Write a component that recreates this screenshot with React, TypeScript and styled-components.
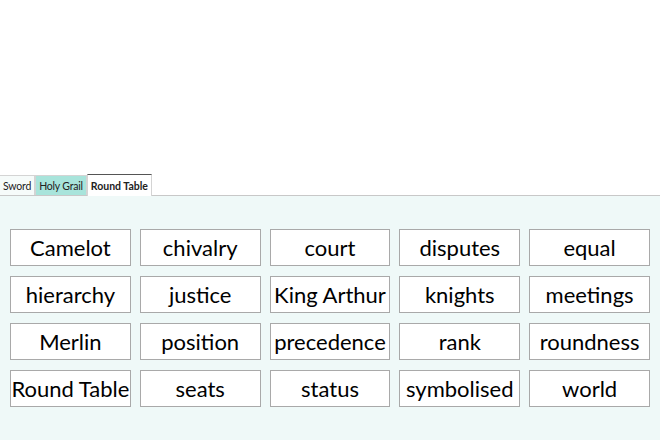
import React from "react";
import styled, { createGlobalStyle } from "styled-components";

const Global = createGlobalStyle`
  html, body { margin: 0; padding: 0; background: #ffffff; }
  body { font-family: "Lato", "Open Sans", sans-serif; }
  #root { width: 660px; height: 440px; }
`;

const Page = styled.div`
  width: 660px;
  height: 440px;
  display: flex;
  flex-direction: column;
  justify-content: flex-end;
  overflow: hidden;
`;

const TabBar = styled.div`
  display: flex;
  align-items: flex-end;
  height: 22px;
  border-bottom: 1px solid #c8c8c8;
  box-sizing: border-box;
`;

const Tab = styled.div<{ $active?: boolean; $tone?: string }>`
  font-family: "Lato", "Open Sans", sans-serif;
  font-size: ${(p) => (p.$active ? "10.5px" : "10.5px")};
  letter-spacing: ${(p) => (p.$active ? "0" : "-0.2px")};
  color: #222;
  font-weight: ${(p) => (p.$active ? 700 : 400)};
  background: ${(p) => (p.$active ? "#ffffff" : p.$tone || "#f6fbfa")};
  height: ${(p) => (p.$active ? "22px" : "20px")};
  box-sizing: border-box;
  padding: 1px 3px 0 3px;
  display: flex;
  align-items: center;
  border-left: 1px solid #d4d4d4;
  border-right: 1px solid #d4d4d4;
  border-top: 1px solid ${(p) => (p.$active ? "#555" : "#d4d4d4")};
  margin-bottom: ${(p) => (p.$active ? "-1px" : "0")};
  &:first-child { border-left: none; }
`;

const Panel = styled.div`
  height: 244px;
  background: #eff9f8;
  box-sizing: border-box;
  padding: 33px 10px 0 10px;
`;

const Grid = styled.div`
  display: grid;
  grid-template-columns: repeat(5, 1fr);
  column-gap: 9px;
  row-gap: 10px;
`;

const Card = styled.div`
  height: 37px;
  box-sizing: border-box;
  background: #ffffff;
  border: 1px solid #a9a9a9;
  display: flex;
  align-items: center;
  justify-content: center;
  font-family: "Lato", "Open Sans", sans-serif;
  font-size: 22px;
  color: #000;
  white-space: nowrap;
  overflow: hidden;
`;

const words = [
  "Camelot", "chivalry", "court", "disputes", "equal",
  "hierarchy", "justice", "King Arthur", "knights", "meetings",
  "Merlin", "position", "precedence", "rank", "roundness",
  "Round Table", "seats", "status", "symbolised", "world",
];

export default function App() {
  return (
    <>
      <Global />
      <Page>
        <TabBar>
          <Tab>Sword</Tab>
          <Tab $tone="#a8e4db">Holy Grail</Tab>
          <Tab $active>Round Table</Tab>
        </TabBar>
        <Panel>
          <Grid>
            {words.map((w) => (
              <Card key={w}>{w}</Card>
            ))}
          </Grid>
        </Panel>
      </Page>
    </>
  );
}
